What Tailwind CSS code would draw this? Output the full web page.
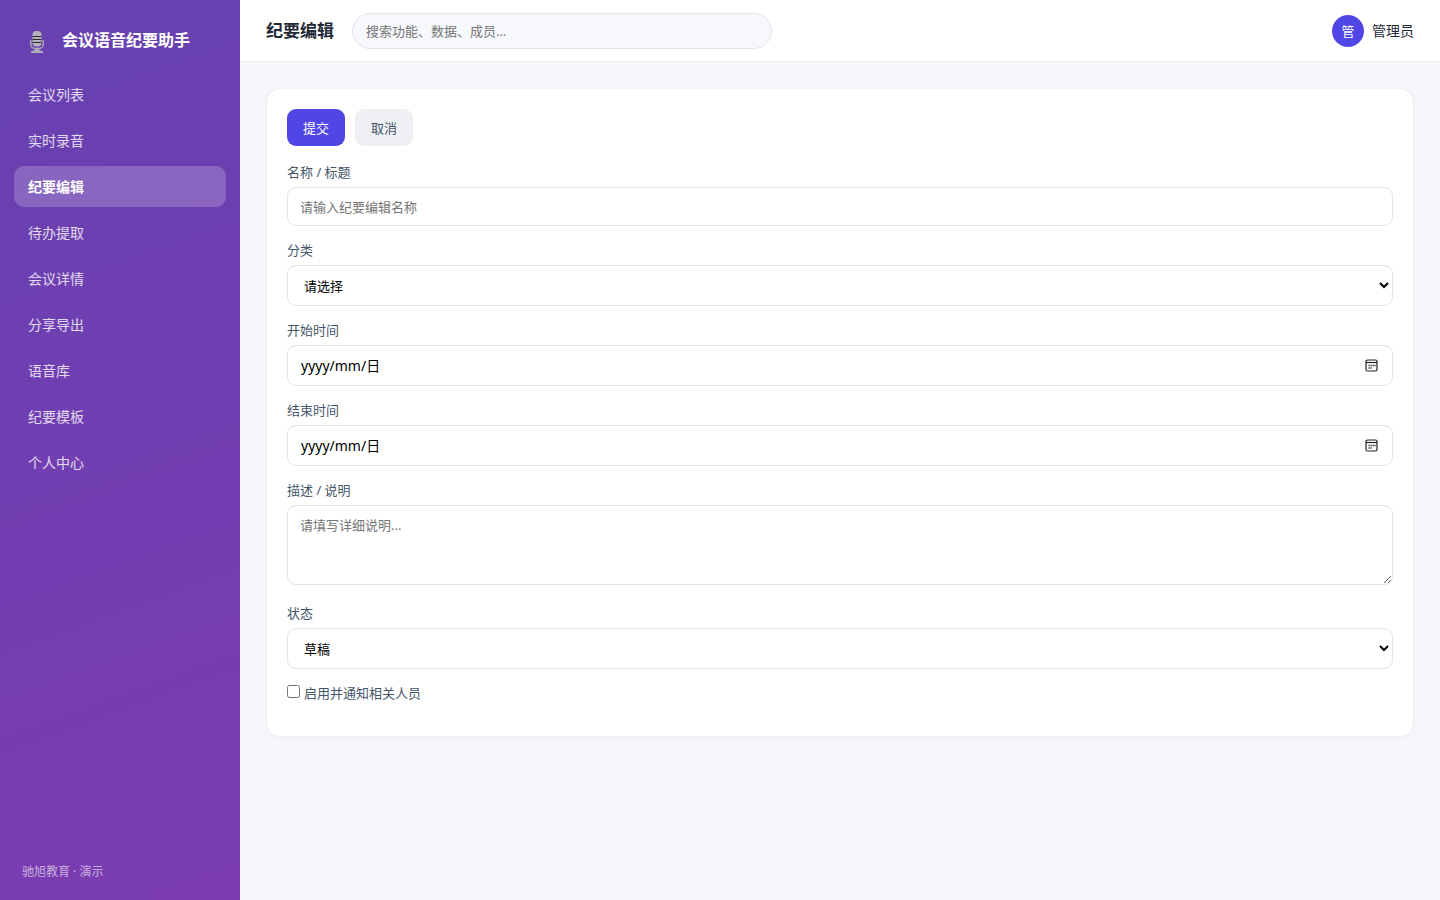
<!DOCTYPE html>
<html lang="zh-CN">
<head>
<meta charset="utf-8">
<meta name="viewport" content="width=device-width, initial-scale=1">
<title>纪要编辑 - 会议语音纪要助手</title>
<script src="https://cdn.jsdelivr.net/npm/@tailwindcss/browser@4"></script>
</head>
<body class="flex min-h-screen bg-[#f5f7fb] font-['Noto_Sans','Noto_Sans_CJK_SC',sans-serif] text-[14px] leading-5 text-[#1f2937]">
  <aside class="flex w-60 shrink-0 flex-col bg-[linear-gradient(160deg,#6741b1,#7b3cb1)] px-3.5 text-white/80">
    <div class="flex h-[74px] items-center gap-4 px-3.5 pt-1.5 text-white">
      <svg class="mt-1 h-6 w-[18px] shrink-0" viewBox="0 0 18 24" aria-hidden="true">
        <path d="M2.800 10v4.500a4.500 4 0 0 0 4.500 4h3.400a4.500 4 0 0 0 4.500-4V10" fill="none" stroke="#aaa5b4" stroke-width="1.500"/>
        <rect x="4.500" y="1" width="9" height="15.500" rx="4" fill="#b5b1bb"/>
        <path d="M4.500 6.500h9M4.500 9.500h9M4.500 12.500h9" stroke="#2b2a30" stroke-width="1"/>
        <path d="M7 18.500h4V20l4 1.500V23H3v-1.500L7 20z" fill="#b0acb8"/>
      </svg>
      <strong class="text-base font-semibold leading-6 whitespace-nowrap">会议语音纪要助手</strong>
    </div>
    <nav class="flex flex-col gap-[5px]" aria-label="主导航">
      <a href="#" class="flex h-[41px] items-center rounded-[10px] px-3.5">会议列表</a>
      <a href="#" class="flex h-[41px] items-center rounded-[10px] px-3.5">实时录音</a>
      <a href="#" aria-current="page" class="flex h-[41px] items-center rounded-[10px] bg-white/20 px-3.5 font-semibold text-white">纪要编辑</a>
      <a href="#" class="flex h-[41px] items-center rounded-[10px] px-3.5">待办提取</a>
      <a href="#" class="flex h-[41px] items-center rounded-[10px] px-3.5">会议详情</a>
      <a href="#" class="flex h-[41px] items-center rounded-[10px] px-3.5">分享导出</a>
      <a href="#" class="flex h-[41px] items-center rounded-[10px] px-3.5">语音库</a>
      <a href="#" class="flex h-[41px] items-center rounded-[10px] px-3.5">纪要模板</a>
      <a href="#" class="flex h-[41px] items-center rounded-[10px] px-3.5">个人中心</a>
    </nav>
    <p class="mt-auto px-2 pb-[18px] text-xs leading-5 text-white/60">驰旭教育 · 演示</p>
  </aside>

  <div class="flex min-w-0 flex-1 flex-col">
    <header class="flex h-[62px] items-center gap-[18px] border-b border-[#eceef2] bg-white px-[26px]">
      <h1 class="text-[17px] font-bold whitespace-nowrap">纪要编辑</h1>
      <input type="search" aria-label="搜索" placeholder="搜索功能、数据、成员…" class="h-9 w-full max-w-[420px] rounded-full border border-[#e2e5ee] bg-[#f7f8fc] px-[13px] text-[13px] placeholder:text-[#757575]">
      <div class="ml-auto flex items-center gap-2 whitespace-nowrap">
        <span class="flex size-8 items-center justify-center rounded-full bg-[#4f46e5] text-[13px] text-white">管</span>
        <span>管理员</span>
      </div>
    </header>

    <main class="p-[26px]">
      <form class="rounded-[14px] border border-[#eff1f5] bg-white px-5 pt-5 pb-[33px] text-[13px] text-[#475569] shadow-[0_1px_4px_rgba(15,23,42,0.04)]">
        <div class="mb-4 flex gap-2.5">
          <button type="submit" class="h-[37px] rounded-[9px] bg-[#4f46e5] px-4 text-white">提交</button>
          <button type="button" class="h-[37px] rounded-[9px] bg-[#eef0f4] px-4">取消</button>
        </div>

        <label for="name" class="mb-[5px] block">名称 / 标题</label>
        <input id="name" type="text" placeholder="请输入纪要编辑名称" class="mb-3.5 block h-[39px] w-full rounded-[9px] border border-[#e2e4ed] bg-white px-3 text-black placeholder:text-[#757575]">

        <label for="category" class="mb-[5px] block">分类</label>
        <select id="category" class="mb-3.5 block h-[41px] w-full rounded-[9px] border border-[#e2e4ed] bg-white px-3 text-black">
          <option>请选择</option>
        </select>

        <label for="start" class="mb-[5px] block">开始时间</label>
        <div class="mb-3.5 flex h-[41px] items-center rounded-[9px] border border-[#e2e4ed] bg-white pl-[13px] pr-3.5 text-[14px] text-black">
          <input id="start" type="text" placeholder="yyyy/mm/日" class="min-w-0 flex-1 outline-none placeholder:text-black">
          <button type="button" aria-label="选择开始时间">
            <svg class="size-[13px]" viewBox="0 0 13 13" fill="none" stroke="#222" aria-hidden="true"><rect x="1" y="1" width="11" height="11" rx="1.500" stroke-width="1.200"/><path d="M1 3.500h11" stroke-width="1.200"/><path d="M5.500 6.500h1.200M7.500 6.500h1.200M9.300 6.500h1.200M3.500 6.500h1.200M3.500 9h1.200M5.500 9h1.200" stroke-width="1.400"/></svg>
          </button>
        </div>

        <label for="end" class="mb-[5px] block">结束时间</label>
        <div class="mb-3.5 flex h-[41px] items-center rounded-[9px] border border-[#e2e4ed] bg-white pl-[13px] pr-3.5 text-[14px] text-black">
          <input id="end" type="text" placeholder="yyyy/mm/日" class="min-w-0 flex-1 outline-none placeholder:text-black">
          <button type="button" aria-label="选择结束时间">
            <svg class="size-[13px]" viewBox="0 0 13 13" fill="none" stroke="#222" aria-hidden="true"><rect x="1" y="1" width="11" height="11" rx="1.500" stroke-width="1.200"/><path d="M1 3.500h11" stroke-width="1.200"/><path d="M5.500 6.500h1.200M7.500 6.500h1.200M9.300 6.500h1.200M3.500 6.500h1.200M3.500 9h1.200M5.500 9h1.200" stroke-width="1.400"/></svg>
          </button>
        </div>

        <label for="description" class="mb-[5px] block">描述 / 说明</label>
        <textarea id="description" placeholder="请填写详细说明..." class="mb-[18px] block h-20 w-full resize rounded-[9px] border border-[#e2e4ed] bg-white px-3 py-[9px] text-black placeholder:text-[#757575]"></textarea>

        <label for="status" class="mb-[5px] block">状态</label>
        <select id="status" class="mb-3.5 block h-[41px] w-full rounded-[9px] border border-[#e2e4ed] bg-white px-3 text-black">
          <option>草稿</option>
        </select>

        <label for="notify" class="flex items-start gap-1"><input id="notify" type="checkbox" class="mt-0.5 size-[13px]">启用并通知相关人员</label>
      </form>
    </main>
  </div>
</body>
</html>
